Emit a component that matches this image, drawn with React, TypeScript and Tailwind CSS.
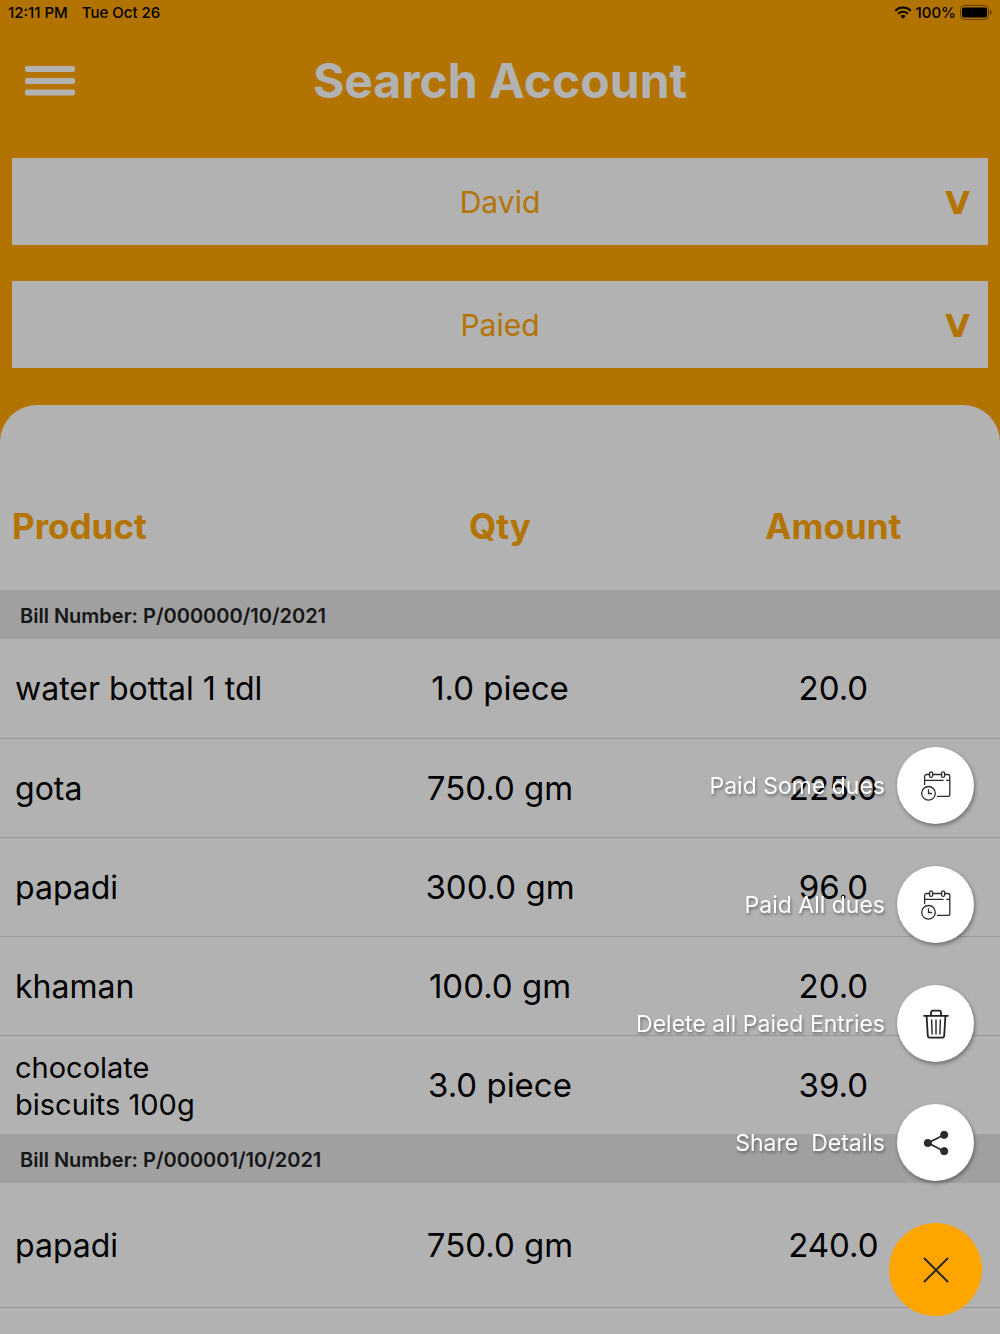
// src/App.tsx
import React from "react";

interface BillItem {
  name: string;
  qty: string;
  amount: string;
}

interface Bill {
  number: string;
  items: BillItem[];
}

const bills: Bill[] = [
  {
    number: "P/000000/10/2021",
    items: [
      { name: "water bottal 1 tdl", qty: "1.0 piece", amount: "20.0" },
      { name: "gota", qty: "750.0 gm", amount: "225.0" },
      { name: "papadi", qty: "300.0 gm", amount: "96.0" },
      { name: "khaman", qty: "100.0 gm", amount: "20.0" },
      { name: "chocolate biscuits 100g", qty: "3.0 piece", amount: "39.0" },
    ],
  },
  {
    number: "P/000001/10/2021",
    items: [{ name: "papadi", qty: "750.0 gm", amount: "240.0" }],
  },
];

const StatusBar: React.FC = () => (
  <div className="flex h-[25px] items-center justify-between px-2 text-[15px] leading-5 font-medium text-black">
    <div className="flex gap-3.5">
      <span>12:11 PM</span>
      <span>Tue Oct 26</span>
    </div>
    <div className="flex items-center gap-1">
      <svg width="18" height="14" viewBox="0 0 18 14" fill="none" stroke="currentColor" strokeWidth="2">
        <path d="M1.2 4.7a11.2 11.2 0 0 1 15.6 0" />
        <path d="M4.1 7.7a7 7 0 0 1 9.8 0" />
        <path d="M9 12.7 6.4 10.1a3.8 3.8 0 0 1 5.2 0Z" fill="currentColor" stroke="none" />
      </svg>
      <span>100%</span>
      <svg width="32" height="15" viewBox="0 0 32 15">
        <rect x="0.5" y="0.5" width="28" height="14" rx="4" fill="none" stroke="currentColor" opacity="0.45" />
        <rect x="2" y="2.5" width="25" height="10" rx="2" fill="currentColor" />
        <path d="M30 5v5c2-.8 2-4.2 0-5Z" fill="currentColor" opacity="0.5" />
      </svg>
    </div>
  </div>
);

const PickerField: React.FC<{ label: string; options: string[] }> = ({ label, options }) => (
  <label className="relative block h-[87px] bg-white text-[#ffa500]">
    <select
      aria-label={label}
      className="h-full w-full appearance-none bg-transparent px-12 pt-0.5 text-center text-[30px] [text-align-last:center]"
    >
      {options.map((option) => (
        <option key={option}>{option}</option>
      ))}
    </select>
    <span className="pointer-events-none absolute inset-y-0 right-[18px] flex items-center pt-0.5 font-['DejaVu_Sans'] text-[32px] font-bold">
      V
    </span>
  </label>
);

const CalendarClockIcon: React.FC = () => (
  <svg width="30" height="30" viewBox="0 0 30 30" fill="none" stroke="#2b2b2b" strokeWidth="1.3">
    <path d="M3.6 14V5.5a2 2 0 0 1 2-2h2.9M11.5 3.5h9M23.7 3.5h3.1a2 2 0 0 1 2 2v18.6a1.2 1.2 0 0 1-1.2 1.2H16" />
    <path d="M3.6 9.3h19M25.2 9.3h3.6" />
    <rect x="8.6" y="0.8" width="3" height="5.6" rx="1.5" />
    <rect x="20.6" y="0.8" width="3" height="5.6" rx="1.5" />
    <circle cx="7.5" cy="22.3" r="6.8" />
    <path d="M7.5 18.3v4.2h3.4" />
  </svg>
);

const TrashIcon: React.FC = () => (
  <svg width="26" height="30" viewBox="0 0 26 30" fill="none" stroke="#222" strokeWidth="1.8" strokeLinecap="round" strokeLinejoin="round">
    <path d="M1 6.8h24M8 6.5V3.6a2 2 0 0 1 2-2h6a2 2 0 0 1 2 2v2.9" />
    <path d="m3.6 7 1.2 19.8a2 2 0 0 0 2 1.9h12.4a2 2 0 0 0 2-1.9L22.4 7" />
    <path d="m8.6 11 .5 14M13 11v14M17.4 11l-.5 14" strokeWidth="1.4" />
  </svg>
);

const ShareIcon: React.FC = () => (
  <svg width="26" height="26" viewBox="0 0 26 26" fill="#2b2b2b" stroke="#2b2b2b">
    <path d="M21.2 4.8 5 13l16.2 8.2" fill="none" strokeWidth="1.8" />
    <circle cx="21.2" cy="4.8" r="3.6" />
    <circle cx="4.8" cy="13" r="3.6" />
    <circle cx="21.2" cy="21.2" r="3.6" />
  </svg>
);

const actions = [
  { label: "Paid Some dues", icon: <CalendarClockIcon /> },
  { label: "Paid All dues", icon: <CalendarClockIcon /> },
  { label: "Delete all Paied Entries", icon: <TrashIcon /> },
  { label: "Share  Details", icon: <ShareIcon /> },
];

const ActionMenu: React.FC = () => (
  <div className="fixed right-[18px] bottom-[18px] flex flex-col items-end gap-[42px]">
    {actions.map((action) => (
      <button
        key={action.label}
        className="mr-2 flex items-center gap-3 text-[23px] whitespace-pre text-white"
      >
        <span className="pt-0.5 [text-shadow:1px_2px_3px_rgb(0_0_0/0.4)]">{action.label}</span>
        <span className="flex size-[77px] items-center justify-center rounded-full bg-white shadow-[1px_2px_4px_rgb(0_0_0/0.4)]">
          {action.icon}
        </span>
      </button>
    ))}
    <button
      aria-label="Close menu"
      className="flex size-[93px] items-center justify-center rounded-full bg-[#ffa500]"
    >
      <svg width="26" height="26" viewBox="0 0 26 26" stroke="#2b2b2b" strokeWidth="2" strokeLinecap="round">
        <path d="m1.5 1.5 23 23M24.5 1.5l-23 23" />
      </svg>
    </button>
  </div>
);

const BillTable: React.FC = () => (
  <table className="w-full table-fixed text-[33px] leading-10 text-black">
    <thead>
      <tr className="h-32 text-[35px] text-[#ffa500]">
        <th className="px-3 text-left font-bold">Product</th>
        <th className="font-bold">Qty</th>
        <th className="font-bold">Amount</th>
      </tr>
    </thead>
    {bills.map((bill, index) => (
      <tbody key={bill.number}>
        <tr className="h-[49px] bg-[#e5e5e5]">
          <th colSpan={3} className="px-5 pt-0.5 text-left text-xl leading-6 font-semibold text-[#222]">
            Bill Number: {bill.number}
          </th>
        </tr>
        {bill.items.map((item) => (
          <tr
            key={item.name}
            className={
              index === 0
                ? "h-[99px] border-b border-[#dcdcdc] last:border-b-0"
                : "h-[124px] border-b border-[#dcdcdc]"
            }
          >
            <td className="px-[15px] pt-0.5">
              <p className={item.name.length > 20 ? "w-52 text-[29px] leading-[37px]" : "text-[32px] leading-10"}>
                {item.name}
              </p>
            </td>
            <td className="text-center">{item.qty}</td>
            <td className="text-center">{item.amount}</td>
          </tr>
        ))}
      </tbody>
    ))}
  </table>
);

export default function App() {
  return (
    <div className="flex min-h-screen flex-col bg-[#ffa500] font-[Inter,sans-serif]">
      <StatusBar />
      <header className="grid h-[111px] grid-cols-[50px_1fr_50px] items-center px-[25px]">
        <button aria-label="Open menu">
          <svg width="50" height="32" viewBox="0 0 50 32" fill="#fff">
            <rect y="1" width="50" height="6" rx="2" />
            <rect y="13" width="50" height="6" rx="2" />
            <rect y="24.5" width="50" height="6" rx="2" />
          </svg>
        </button>
        <h1 className="text-center text-5xl font-bold text-white">Search Account</h1>
      </header>
      <div className="flex flex-col gap-9 px-3 pt-[22px] pb-[37px]">
        <PickerField label="Customer" options={["David"]} />
        <PickerField label="Payment status" options={["Paied"]} />
      </div>
      <main className="flex-1 rounded-t-[37px] bg-white pt-[57px]">
        <BillTable />
      </main>
      {/* Dimmed backdrop behind the open menu */}
      <div className="pointer-events-none fixed inset-0 bg-black/30" />
      <ActionMenu />
    </div>
  );
}
